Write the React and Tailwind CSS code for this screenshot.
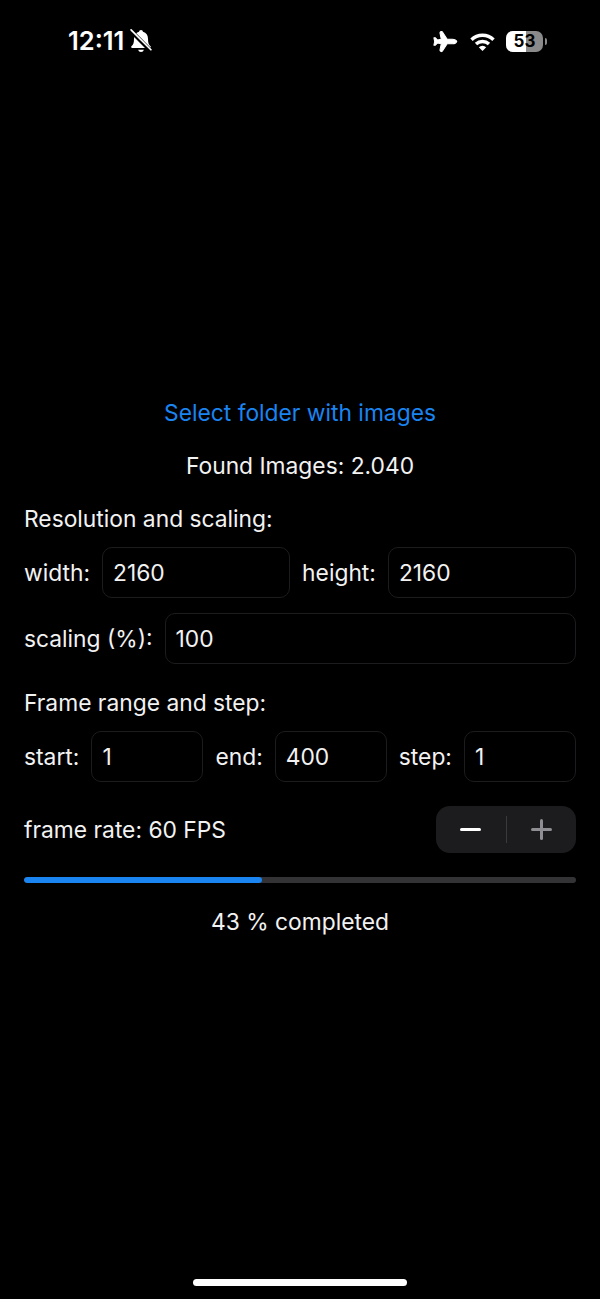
import { Plane } from 'lucide-react';

const Field = ({ value, className = '' }) => (
  <div className={`flex h-[51px] items-center rounded-[10px] border border-[#1c1c1e] px-[10px] ${className}`}>
    {value}
  </div>
);

const StatusBar = () => (
  <div className="flex h-[82px] items-start justify-between pl-[68px] pr-[53px] pt-[26px] text-white">
    <div className="flex items-center gap-[3px]">
      <span className="text-[25.5px] font-semibold leading-[30px]">12:11</span>
      <svg width="28" height="28" viewBox="0 0 24 24" fill="white">
        <path d="M12 2.500c-1 0-1.600.7-1.700 1.600C7.500 4.800 6 7.200 6 10c0 3.500-.6 5-2.200 6.600-.5.6-.2 1.400.6 1.400h15.200c.8 0 1.100-.8.6-1.400C18.600 15 18 13.500 18 10c0-2.800-1.500-5.200-4.300-5.900-.1-.9-.7-1.600-1.700-1.600z" />
        <path d="M9.500 19.500a2.600 2.600 0 0 0 5 0z" />
        <path d="M3.500 3.500 20.500 20.500" stroke="black" strokeWidth="3.600" />
        <path d="M3.500 2.500 20.500 19.500" stroke="white" strokeWidth="1.500" strokeLinecap="round" />
      </svg>
    </div>
    <div className="flex items-center gap-[11px] pt-[3px]">
      <Plane className="mr-[1px] h-[25px] w-[25px] -translate-x-[2px] rotate-45" fill="white" strokeWidth={1} />
      <svg width="25" height="18" viewBox="0 0 25 18" fill="none" stroke="white" strokeWidth="3.400">
        <path d="M1.500 6.800a15.500 15.500 0 0 1 22 0" />
        <path d="M6 11a9.500 9.500 0 0 1 13 0" />
        <path d="M12.500 18 8.800 14.200a5.200 5.200 0 0 1 7.400 0z" fill="white" strokeWidth="0" />
      </svg>
      <div className="flex items-center gap-[2px]">
        <div className="relative flex h-[21px] w-[37px] items-center justify-center overflow-hidden rounded-[7px] bg-[#8a8a8a]">
          <div className="absolute inset-y-0 left-0 w-[20px] bg-white" />
          <span className="relative text-[17px] font-bold leading-none text-black">53</span>
        </div>
        <div className="h-[7px] w-[2px] rounded-r-full bg-[#8a8a8a]" />
      </div>
    </div>
  </div>
);

const App = () => {
  return (
    <div className="flex h-[1299px] w-[600px] flex-col bg-black font-['Inter','Noto_Sans',sans-serif] text-[22.8px] leading-[28px] text-[#f2f2f2]">
      <StatusBar />

      <div className="flex flex-1 flex-col px-6 pt-[317px]">
        <p className="text-center text-[#1a84f0]">Select folder with images</p>
        <p className="mt-[25px] text-center">Found Images: 2.040</p>
        <p className="mt-[25px]">Resolution and scaling:</p>

        <div className="mt-[14px] flex items-center gap-3">
          <span>width:</span>
          <Field value="2160" className="flex-1" />
          <span>height:</span>
          <Field value="2160" className="flex-1" />
        </div>

        <div className="mt-[15px] flex items-center gap-3">
          <span>scaling (%):</span>
          <Field value="100" className="flex-1" />
        </div>

        <p className="mt-[25px]">Frame range and step:</p>

        <div className="mt-[14px] flex items-center gap-3">
          <span>start:</span>
          <Field value="1" className="flex-1" />
          <span>end:</span>
          <Field value="400" className="flex-1" />
          <span>step:</span>
          <Field value="1" className="flex-1" />
        </div>

        <div className="mt-[24px] flex items-center justify-between">
          <span>frame rate: 60 FPS</span>
          <div className="flex h-[47px] w-[140px] items-center rounded-[14px] bg-[#1c1c1e]">
            <div className="flex flex-1 justify-center">
              <div className="h-[3px] w-[21px] rounded-full bg-white" />
            </div>
            <div className="h-[27px] w-px bg-[#3a3a3c]" />
            <div className="relative flex flex-1 items-center justify-center">
              <div className="h-[2.5px] w-[21px] rounded-full bg-[#8e8e93]" />
              <div className="absolute h-[21px] w-[2.5px] rounded-full bg-[#8e8e93]" />
            </div>
          </div>
        </div>

        <div className="mt-[24px] h-[6px] w-full overflow-hidden rounded-full bg-[#333335]">
          <div className="h-full w-[43.2%] rounded-full bg-[#1a84f0]" />
        </div>

        <p className="mt-[25px] text-center">43 % completed</p>
      </div>

      <div className="flex justify-center pb-[13px]">
        <div className="h-[7px] w-[214px] rounded-full bg-white" />
      </div>
    </div>
  );
};

export default App;
